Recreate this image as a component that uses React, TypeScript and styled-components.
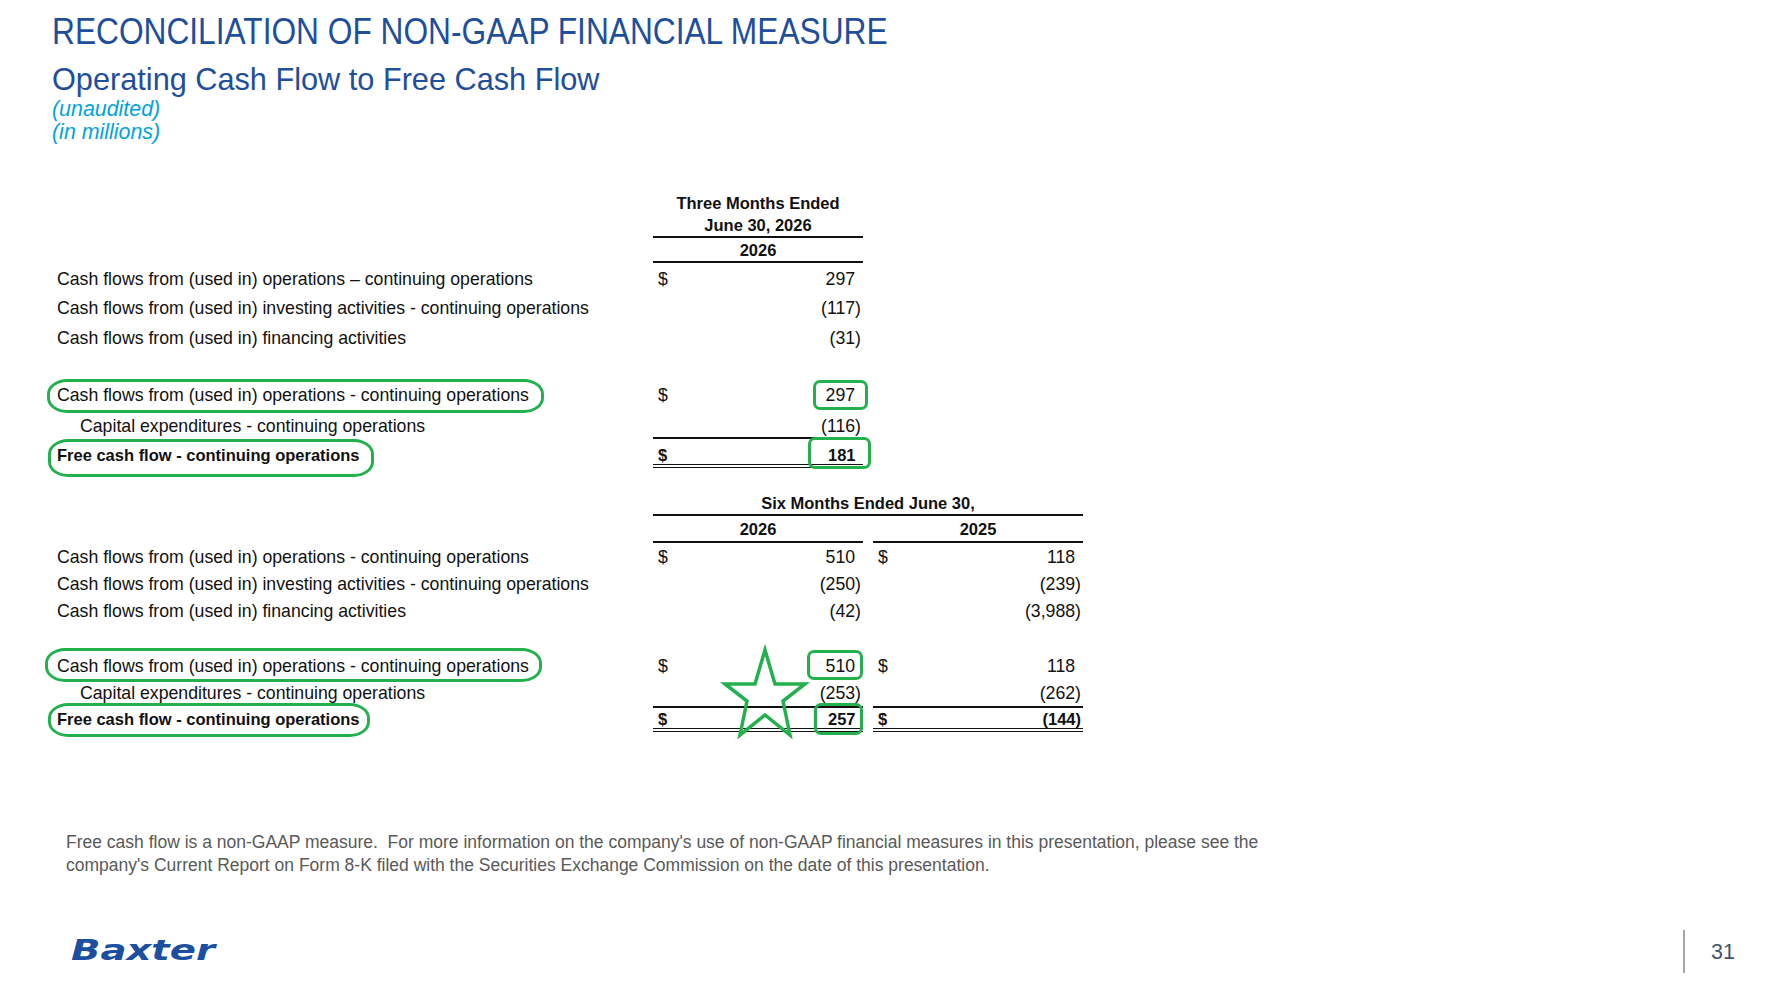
import React from "react";
import styled, { createGlobalStyle } from "styled-components";

const GREEN = "#22b14c";

const GlobalStyle = createGlobalStyle`
  html, body { margin: 0; padding: 0; background: #ffffff; }
  body { font-family: "Liberation Sans", Arial, sans-serif; }
`;

const Page = styled.div`
  width: 1783px;
  height: 1000px;
  background: #ffffff;
  display: flex;
  flex-direction: column;
  overflow: hidden;
  color: #111111;
  font-family: "Liberation Sans", Arial, sans-serif;
`;

const Header = styled.header`
  padding: 12px 0 0 52px;
  display: flex;
  flex-direction: column;
  align-items: flex-start;
`;

const Title = styled.h1`
  margin: 0;
  font-weight: 400;
  font-size: 36px;
  line-height: 40px;
  color: #1f4e9c;
  white-space: nowrap;
  transform: scaleX(0.88);
  transform-origin: left center;
`;

const Subtitle = styled.h2`
  margin: 11px 0 0 0;
  font-weight: 400;
  font-size: 30.7px;
  line-height: 34px;
  color: #1f4e9c;
  white-space: nowrap;
`;

const Note = styled.div`
  font-style: italic;
  font-size: 21.4px;
  line-height: 22px;
  color: #00a3e0;
  margin-top: 1px;
`;

const Section = styled.section<{ $mt: number }>`
  position: relative;
  margin-top: ${(p) => p.$mt}px;
  padding-left: 57px;
  display: flex;
  flex-direction: column;
`;

const COLS = "586px 210px 210px";

const Row = styled.div<{ $h: number; $pt?: number }>`
  display: grid;
  grid-template-columns: ${COLS};
  column-gap: 10px;
  height: ${(p) => p.$h}px;
  padding-top: ${(p) => p.$pt ?? 0}px;
  box-sizing: border-box;
  align-items: center;
`;

const HeadCell = styled.div<{ $span?: number }>`
  grid-column: ${(p) => (p.$span === 2 ? "2 / span 2" : "auto")};
  text-align: center;
  font-weight: 700;
  font-size: 16.5px;
  line-height: 22px;
  color: #111111;
`;

const RuleRow = styled.div<{ $double?: boolean; $thick?: number }>`
  display: grid;
  grid-template-columns: ${COLS};
  column-gap: 10px;
  height: ${(p) => (p.$double ? 5.5 : p.$thick ?? 2)}px;
`;

const Rule = styled.div<{ $double?: boolean; $thick?: number; $span?: number; $col: number }>`
  grid-column: ${(p) => (p.$span === 2 ? `${p.$col} / span 2` : `${p.$col}`)};
  ${(p) =>
    p.$double
      ? `border-top: 1.5px solid #111; border-bottom: 1.5px solid #111; height: 2.5px;`
      : `background: #111; height: ${p.$thick ?? 2}px;`}
`;

const Label = styled.div<{ $indent?: number; $bold?: boolean }>`
  padding-left: ${(p) => p.$indent ?? 0}px;
  font-size: ${(p) => (p.$bold ? 16.5 : 17.7)}px;
  font-weight: ${(p) => (p.$bold ? 700 : 400)};
  line-height: 22px;
  white-space: nowrap;
`;

const LabelText = styled.span`
  position: relative;
  display: inline-block;
`;

const Oval = styled.span<{ $t: number; $b: number; $l: number; $r: number }>`
  position: absolute;
  top: ${(p) => p.$t}px;
  bottom: ${(p) => p.$b}px;
  left: ${(p) => p.$l}px;
  right: ${(p) => p.$r}px;
  border: 3px solid ${GREEN};
  border-radius: 20px / 15px;
  pointer-events: none;
`;

const Amount = styled.div<{ $bold?: boolean }>`
  display: flex;
  justify-content: space-between;
  align-items: center;
  padding: 0 2px 0 5px;
  font-size: ${(p) => (p.$bold ? 16.5 : 17.7)}px;
  font-weight: ${(p) => (p.$bold ? 700 : 400)};
  line-height: 22px;
`;

const Num = styled.span`
  position: relative;
  display: inline-block;
  white-space: nowrap;
`;

const Paren = styled.span<{ $hidden?: boolean }>`
  visibility: ${(p) => (p.$hidden ? "hidden" : "visible")};
`;

const NumBox = styled.span<{ $t: number; $b: number; $l: number; $r: number }>`
  position: absolute;
  top: ${(p) => p.$t}px;
  bottom: ${(p) => p.$b}px;
  left: ${(p) => p.$l}px;
  right: ${(p) => p.$r}px;
  border: 3px solid ${GREEN};
  border-radius: 7px;
  pointer-events: none;
`;

const Star = styled.svg`
  position: absolute;
  left: 720px;
  top: 154px;
  width: 90px;
  height: 95px;
  overflow: visible;
  pointer-events: none;
`;

const Footnote = styled.p`
  margin: 98px 0 0 0;
  padding-left: 66px;
  font-size: 17.5px;
  line-height: 23px;
  color: #595959;
  white-space: nowrap;
`;

const Footer = styled.footer`
  margin-top: 53px;
  height: 43px;
  display: flex;
  align-items: center;
  padding: 0 48px 0 69px;
`;

const Logo = styled.svg`
  width: 148px;
  height: 26px;
  display: block;
  overflow: visible;
`;

const Spacer = styled.div`
  flex: 1;
`;

const PageDivider = styled.div`
  width: 2px;
  height: 43px;
  background: #a6a6a6;
  margin-right: 26px;
`;

const PageNumber = styled.div`
  font-size: 21.5px;
  color: #44546a;
  line-height: 24px;
`;

type Box = { t: number; b: number; l: number; r: number };

function Money({
  dollar,
  value,
  neg,
  bold,
  box,
}: {
  dollar?: boolean;
  value: string;
  neg?: boolean;
  bold?: boolean;
  box?: Box;
}) {
  return (
    <Amount $bold={bold}>
      <span>{dollar ? "$" : ""}</span>
      <Num>
        {neg ? "(" : ""}
        {value}
        <Paren $hidden={!neg}>)</Paren>
        {box && <NumBox $t={box.t} $b={box.b} $l={box.l} $r={box.r} />}
      </Num>
    </Amount>
  );
}

function RowLabel({
  text,
  indent,
  bold,
  oval,
}: {
  text: string;
  indent?: number;
  bold?: boolean;
  oval?: Box;
}) {
  return (
    <Label $indent={indent} $bold={bold}>
      <LabelText>
        {text}
        {oval && <Oval $t={oval.t} $b={oval.b} $l={oval.l} $r={oval.r} />}
      </LabelText>
    </Label>
  );
}

const OPS = "Cash flows from (used in) operations - continuing operations";
const CAPEX = "Capital expenditures - continuing operations";
const FCF = "Free cash flow - continuing operations";

export default function App() {
  return (
    <>
      <GlobalStyle />
      <Page>
        <Header>
          <Title>RECONCILIATION OF NON-GAAP FINANCIAL MEASURE</Title>
          <Subtitle>Operating Cash Flow to Free Cash Flow</Subtitle>
          <Note>(unaudited)</Note>
          <Note>(in millions)</Note>
        </Header>

        <Section $mt={49}>
          <Row $h={44}>
            <div />
            <HeadCell>
              Three Months Ended
              <br />
              June 30, 2026
            </HeadCell>
          </Row>
          <RuleRow>
            <Rule $col={2} />
          </RuleRow>
          <Row $h={23}>
            <div />
            <HeadCell>2026</HeadCell>
          </Row>
          <RuleRow>
            <Rule $col={2} />
          </RuleRow>
          <Row $h={30} $pt={1}>
            <RowLabel text="Cash flows from (used in) operations – continuing operations" />
            <Money dollar value="297" />
          </Row>
          <Row $h={30}>
            <RowLabel text="Cash flows from (used in) investing activities - continuing operations" />
            <Money value="117" neg />
          </Row>
          <Row $h={30}>
            <RowLabel text="Cash flows from (used in) financing activities" />
            <Money value="31" neg />
          </Row>
          <Row $h={27} />
          <Row $h={30}>
            <RowLabel text={OPS} oval={{ t: -5, b: -7, l: -10, r: -15 }} />
            <Money dollar value="297" box={{ t: -4, b: -4, l: -13, r: -7 }} />
          </Row>
          <Row $h={27} $pt={4}>
            <RowLabel text={CAPEX} indent={23} />
            <Money value="116" neg />
          </Row>
          <RuleRow $thick={1.5}>
            <Rule $col={2} $thick={1.5} />
          </RuleRow>
          <Row $h={25} $pt={5}>
            <RowLabel text={FCF} bold oval={{ t: -5, b: -11, l: -9, r: -14 }} />
            <Money dollar value="181" bold box={{ t: -7, b: -3, l: -20, r: -10 }} />
          </Row>
          <RuleRow $double>
            <Rule $col={2} $double />
          </RuleRow>
        </Section>

        <Section $mt={23}>
          <Row $h={22}>
            <div />
            <HeadCell $span={2}>Six Months Ended June 30,</HeadCell>
          </Row>
          <RuleRow>
            <Rule $col={2} $span={2} />
          </RuleRow>
          <Row $h={25}>
            <div />
            <HeadCell>2026</HeadCell>
            <HeadCell>2025</HeadCell>
          </Row>
          <RuleRow>
            <Rule $col={2} />
            <Rule $col={3} />
          </RuleRow>
          <Row $h={27} $pt={1}>
            <RowLabel text={OPS} />
            <Money dollar value="510" />
            <Money dollar value="118" />
          </Row>
          <Row $h={27}>
            <RowLabel text="Cash flows from (used in) investing activities - continuing operations" />
            <Money value="250" neg />
            <Money value="239" neg />
          </Row>
          <Row $h={27}>
            <RowLabel text="Cash flows from (used in) financing activities" />
            <Money value="42" neg />
            <Money value="3,988" neg />
          </Row>
          <Row $h={28} />
          <Row $h={27}>
            <RowLabel text={OPS} oval={{ t: -7, b: -5, l: -12, r: -13 }} />
            <Money dollar value="510" box={{ t: -5, b: -3, l: -19, r: -2 }} />
            <Money dollar value="118" />
          </Row>
          <Row $h={27}>
            <RowLabel text={CAPEX} indent={23} />
            <Money value="253" neg />
            <Money value="262" neg />
          </Row>
          <RuleRow $thick={1.5}>
            <Rule $col={2} $thick={1.5} />
            <Rule $col={3} $thick={1.5} />
          </RuleRow>
          <Row $h={20}>
            <RowLabel text={FCF} bold oval={{ t: -5, b: -7, l: -9, r: -10 }} />
            <Money dollar value="257" bold box={{ t: -5, b: -5, l: -14, r: -2 }} />
            <Money dollar value="144" neg bold />
          </Row>
          <RuleRow $double>
            <Rule $col={2} $double />
            <Rule $col={3} $double />
          </RuleRow>
          <Star viewBox="0 0 90 95">
            <polygon
              points="45,4 55,38 85,38 63,55 70,89 45,69 20,89 27,55 5,38 35,38"
              fill="none"
              stroke={GREEN}
              strokeWidth={3.5}
              strokeLinejoin="miter"
            />
          </Star>
        </Section>

        <Footnote>
          Free cash flow is a non-GAAP measure.&nbsp; For more information on the company's use of
          non-GAAP financial measures in this presentation, please see the
          <br />
          company's Current Report on Form 8-K filed with the Securities Exchange Commission on the
          date of this presentation.
        </Footnote>

        <Footer>
          <Logo viewBox="0 0 148 26" aria-label="Baxter">
            <text
              x="2"
              y="21"
              textLength="144"
              lengthAdjust="spacingAndGlyphs"
              fill="#1c4f9f"
              fontFamily="'DejaVu Sans', sans-serif"
              fontWeight="700"
              fontStyle="italic"
              fontSize="29"
            >
              Baxter
            </text>
          </Logo>
          <Spacer />
          <PageDivider />
          <PageNumber>31</PageNumber>
        </Footer>
      </Page>
    </>
  );
}
